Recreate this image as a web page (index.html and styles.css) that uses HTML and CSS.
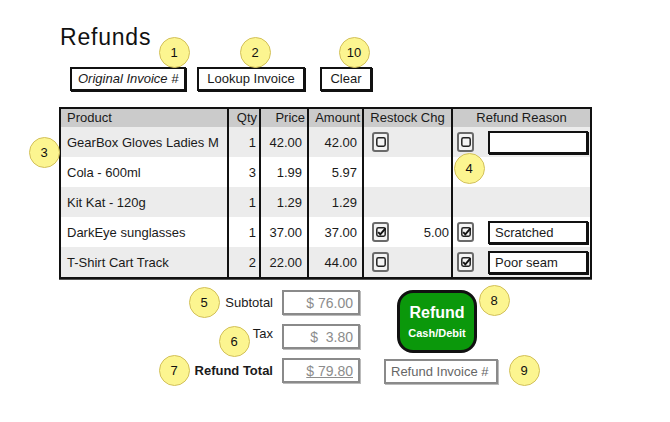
FILE: index.html
```html
<!DOCTYPE html>
<html>
<head>
<meta charset="utf-8">
<link rel="stylesheet" href="styles.css">
</head>
<body>
<div class="page">
  <h1 class="title">Refunds</h1>
  <div class="toolbar">
    <div class="field italic">Original Invoice #</div>
    <div class="btn btn-lookup">Lookup Invoice</div>
    <div class="btn btn-clear">Clear</div>
  </div>

  <div class="grid">
    <div class="hd">Product</div>
    <div class="hd num">Qty</div>
    <div class="hd num">Price</div>
    <div class="hd num">Amount</div>
    <div class="hd ctr">Restock Chg</div>
    <div class="hd ctr">Refund Reason</div>

    <div class="c odd">GearBox Gloves Ladies M</div>
    <div class="c odd num">1</div>
    <div class="c odd num">42.00</div>
    <div class="c odd num">42.00</div>
    <div class="c odd restock"><span class="cb"><svg viewBox="0 0 10 10" width="10" height="10"><rect x="0.8" y="0.8" width="8.4" height="8.4" rx="1.6" fill="none" stroke="#222" stroke-width="1.5"/></svg></span></div>
    <div class="c odd reason"><span class="cb"><svg viewBox="0 0 10 10" width="10" height="10"><rect x="0.8" y="0.8" width="8.4" height="8.4" rx="1.6" fill="none" stroke="#222" stroke-width="1.5"/></svg></span><span class="rfield"></span></div>

    <div class="c">Cola - 600ml</div>
    <div class="c num">3</div>
    <div class="c num">1.99</div>
    <div class="c num">5.97</div>
    <div class="c"></div>
    <div class="c"></div>

    <div class="c odd">Kit Kat - 120g</div>
    <div class="c odd num">1</div>
    <div class="c odd num">1.29</div>
    <div class="c odd num">1.29</div>
    <div class="c odd"></div>
    <div class="c odd"></div>

    <div class="c">DarkEye sunglasses</div>
    <div class="c num">1</div>
    <div class="c num">37.00</div>
    <div class="c num">37.00</div>
    <div class="c restock"><span class="cb"><svg viewBox="0 0 10 10" width="10" height="10"><rect x="0.8" y="0.8" width="8.4" height="8.4" rx="1.6" fill="none" stroke="#222" stroke-width="1.5"/><path d="M2.2 5.2 L4.3 7.4 L9.6 1.2" fill="none" stroke="#111" stroke-width="1.9"/></svg></span><span class="chg">5.00</span></div>
    <div class="c reason"><span class="cb"><svg viewBox="0 0 10 10" width="10" height="10"><rect x="0.8" y="0.8" width="8.4" height="8.4" rx="1.6" fill="none" stroke="#222" stroke-width="1.5"/><path d="M2.2 5.2 L4.3 7.4 L9.6 1.2" fill="none" stroke="#111" stroke-width="1.9"/></svg></span><span class="rfield">Scratched</span></div>

    <div class="c odd">T-Shirt Cart Track</div>
    <div class="c odd num">2</div>
    <div class="c odd num">22.00</div>
    <div class="c odd num">44.00</div>
    <div class="c odd restock"><span class="cb"><svg viewBox="0 0 10 10" width="10" height="10"><rect x="0.8" y="0.8" width="8.4" height="8.4" rx="1.6" fill="none" stroke="#222" stroke-width="1.5"/></svg></span></div>
    <div class="c odd reason"><span class="cb"><svg viewBox="0 0 10 10" width="10" height="10"><rect x="0.8" y="0.8" width="8.4" height="8.4" rx="1.6" fill="none" stroke="#222" stroke-width="1.5"/><path d="M2.2 5.2 L4.3 7.4 L9.6 1.2" fill="none" stroke="#111" stroke-width="1.9"/></svg></span><span class="rfield">Poor seam</span></div>
  </div>

  <div class="bottom">
    <div class="totals">
      <span class="lbl">Subtotal</span><span class="amt">$ 76.00</span>
      <span class="lbl lbl-tax">Tax</span><span class="amt">$&nbsp; 3.80</span>
      <span class="lbl bold">Refund Total</span><span class="amt"><span class="ul">$ 79.80</span></span>
    </div>
    <div class="actions">
      <div class="refund-btn"><span class="rb-main">Refund</span><span class="rb-sub">Cash/Debit</span></div>
      <div class="inv-field">Refund Invoice #</div>
    </div>
  </div>

  <span class="callout co-1">1</span>
  <span class="callout co-2">2</span>
  <span class="callout co-10">10</span>
  <span class="callout co-3">3</span>
  <span class="callout co-4">4</span>
  <span class="callout co-5">5</span>
  <span class="callout co-6">6</span>
  <span class="callout co-7">7</span>
  <span class="callout co-8">8</span>
  <span class="callout co-9">9</span>
</div>
</body>
</html>
```

FILE: styles.css
```css
* { box-sizing: border-box; }
html, body { margin: 0; padding: 0; background: #fff; }
body {
  font-family: "Liberation Sans", Arial, sans-serif;
  font-size: 13px;
  color: #1a1a1a;
}
.page {
  position: relative;
  width: 670px;
  height: 422px;
  padding: 24px 0 0 59px;
  overflow: hidden;
}
.title {
  margin: 0 0 0 1px;
  font-size: 23px;
  line-height: 26px;
  letter-spacing: 0.8px;
  font-weight: normal;
  color: #111;
}
.toolbar {
  display: flex;
  margin: 17px 0 0 11px;
  height: 24px;
}
.field, .btn {
  height: 24px;
  border: 2px solid #111;
  box-shadow: 1px 1px 0 #111;
  background: #fff;
  display: flex;
  align-items: center;
  line-height: 16px;
}
.field {
  width: 116px;
  padding-left: 6px;
}
.italic { font-style: italic; }
.btn { justify-content: center; }
.btn-lookup { width: 108px; margin-left: 11px; }
.btn-clear { width: 52px; margin-left: 15px; }

.grid {
  margin-top: 16px;
  width: 533px;
  display: grid;
  grid-template-columns: 166px 32px 48px 55px 89px 139px;
  grid-template-rows: 18px repeat(5, 30px);
  border: 2px solid #111;
  box-shadow: 0 1px 0 #555;
}
.hd, .c {
  display: flex;
  align-items: center;
  border-left: 2px solid #111;
  white-space: nowrap;
}
.grid > :nth-child(6n+1) { border-left: none; padding-left: 6px; }
.hd { background: #cbcbcb; line-height: 16px; }
.c { background: #fff; }
.c.odd { background: #ececec; }
.num { justify-content: flex-end; padding-right: 4px; }
.hd.num { padding-right: 2px; }
.c.num { padding-right: 5px; }
.grid > :nth-child(6n+2).c { padding-right: 3px; }
.ctr { justify-content: center; }

.restock { padding-left: 8px; }
.chg { margin-left: auto; padding-right: 2px; }
.reason { padding-left: 4px; }
.cb {
  width: 17px;
  height: 20px;
  border: 2px solid #6a6a6a;
  border-radius: 3px;
  background: #f4f4f4;
  display: inline-flex;
  align-items: center;
  justify-content: center;
  flex: none;
}
.rfield {
  margin-left: 14px;
  width: 100px;
  height: 23px;
  border: 2px solid #111;
  box-shadow: 1px 1px 0 #111;
  background: #fff;
  display: flex;
  align-items: center;
  padding-left: 5px;
}

.bottom {
  display: flex;
  margin-top: 11px;
}
.totals {
  display: grid;
  grid-template-columns: 214px 78px;
  grid-auto-rows: 25px;
  column-gap: 9px;
  row-gap: 9px;
}
.lbl {
  display: flex;
  align-items: center;
  justify-content: flex-end;
  color: #1a1a1a;
}
.lbl-tax { align-items: flex-start; padding-top: 2px; }
.bold { font-weight: bold; }
.amt {
  border: 2px solid #8a8a8a;
  box-shadow: 1px 1px 0 #bbb;
  display: flex;
  align-items: center;
  justify-content: flex-end;
  padding-right: 5px;
  font-size: 14px;
  color: #8c8c8c;
}
.ul { text-decoration: underline; }
.actions {
  margin-left: 24px;
  display: flex;
  flex-direction: column;
}
.refund-btn {
  margin-left: 13px;
  width: 80px;
  height: 63px;
  background: #0b980b;
  border: 3px solid #111;
  border-radius: 16px;
  color: #fff;
  font-weight: bold;
  display: flex;
  flex-direction: column;
  align-items: center;
  justify-content: center;
}
.rb-main { font-size: 16px; line-height: 19px; }
.rb-sub { font-size: 11px; line-height: 14px; margin-top: 4px; }
.inv-field {
  margin-top: 6px;
  width: 114px;
  height: 25px;
  border: 2px solid #8a8a8a;
  box-shadow: 1px 1px 0 #bbb;
  display: flex;
  align-items: center;
  padding-left: 5px;
  color: #666;
}

.callout {
  position: absolute;
  width: 31px;
  height: 31px;
  margin: -15.5px 0 0 -15.5px;
  border-radius: 50%;
  background: #fcf590;
  border: 1px solid #d2c05a;
  display: flex;
  align-items: center;
  justify-content: center;
  font-size: 13px;
  color: #111;
}
.co-1 { left: 174px; top: 52px; }
.co-2 { left: 255px; top: 52px; }
.co-10 { left: 354px; top: 52px; }
.co-3 { left: 44px; top: 152px; }
.co-4 { left: 469px; top: 168px; }
.co-5 { left: 204px; top: 302px; }
.co-6 { left: 234px; top: 341px; }
.co-7 { left: 174px; top: 370px; }
.co-8 { left: 494px; top: 300px; }
.co-9 { left: 524px; top: 370px; }
```
